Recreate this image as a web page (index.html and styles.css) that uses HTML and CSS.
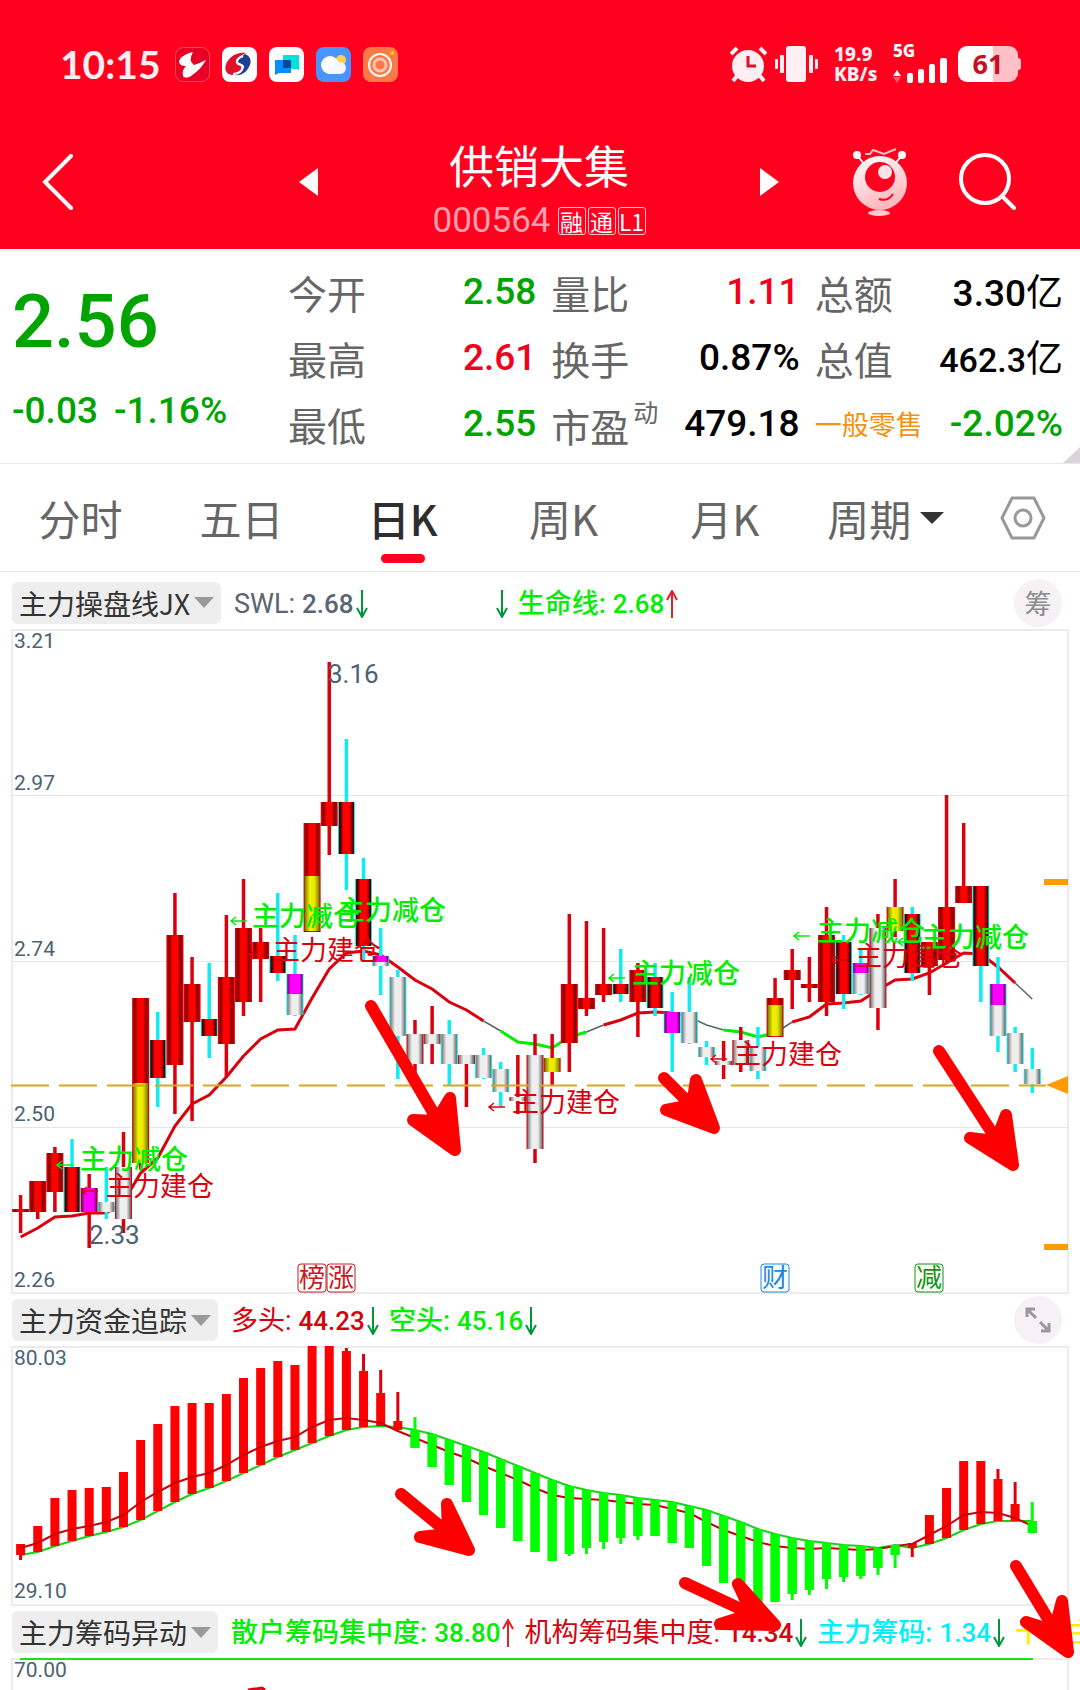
FILE: index.html
```html
<!DOCTYPE html>
<html lang="zh-CN">
<head>
  <meta charset="UTF-8">
  <meta name="viewport" content="width=device-width, initial-scale=1.0">
  <title>供销大集 000564</title>
  <link rel="stylesheet" href="styles.css">
</head>
<body>
  <header class="header">
    <div class="status">
      <span class="time">10:15</span>
      <div class="apps">
        <svg viewBox="0 0 35 35"><rect x=".5" y=".5" width="34" height="34" rx="8" fill="#e60027" stroke="#ff4a58"/><path d="M18 5C10 7 4 11 4 15c1 3 3 4 7 4-3 3-4 6-3 10 1 2 5 2 8 0 6-4 11-9 15-16-5 2-8 4-12 5-2-2-4-4-3-7 0-2 1-4 2-6z" fill="#fff"/></svg>
        <svg viewBox="0 0 35 35"><rect width="35" height="35" rx="8" fill="#fff"/><path d="M24 6C12 4 1 15 4 24c3 7 14 4 17-2 1-4-3-4-5-5-4-2-1-7 8-11z" fill="#e0102c"/><path d="M23 7c6 2 7 8 4 13-3 6-9 9-14 8 6-2 9-5 9-9-1-3-6-2-6-5 1-3 4-5 7-7z" fill="#1c3f94"/><path d="M21 9c-5 2-8 5-5 8 4 1 6 3 3 7-2 2-5 3-8 3" fill="none" stroke="#fff" stroke-width="2"/></svg>
        <svg viewBox="0 0 35 35"><rect width="35" height="35" rx="8" fill="#fff"/><path d="M14 8h16v15l-3-1H14z" fill="#00e0dc"/><path d="M6 13h16v13H10l-4 2z" fill="#0a8cff"/><rect x="14" y="13" width="8" height="8" fill="#044a9c"/></svg>
        <svg viewBox="0 0 35 35"><rect width="35" height="35" rx="8" fill="#4a94ff"/><circle cx="25" cy="13" r="5" fill="#ffd04a"/><circle cx="14" cy="18" r="9" fill="#fff"/><circle cx="24" cy="21" r="6" fill="#f2f7ff"/><rect x="12" y="19" width="13" height="8" fill="#f6f9ff"/></svg>
        <svg viewBox="0 0 35 35"><rect width="35" height="35" rx="8" fill="#ff7848"/><circle cx="17" cy="18" r="11" fill="none" stroke="#fff" stroke-width="2"/><circle cx="17" cy="18" r="6" fill="none" stroke="#ffc4ae" stroke-width="3"/><circle cx="29" cy="6" r="2" fill="#ffd000"/></svg>
      </div>
      <div class="system">
        <svg class="alarm" viewBox="0 0 37 36"><circle cx="18" cy="20" r="16" fill="#ffeef2"/><path d="M1 8l6-6M36 8l-6-6M7 30l-4 5M30 30l4 5" stroke="#ffeef2" stroke-width="4"/><path d="M18 10v10h8" fill="none" stroke="#e0102c" stroke-width="3"/></svg>
        <svg class="vibrate" viewBox="0 0 43 36" fill="#ffeef2"><rect x="11" width="20" height="36" rx="3"/><rect x="5" y="9" width="4" height="18" rx="1"/><rect x="0" y="13" width="3" height="10" rx="1"/><rect x="34" y="9" width="4" height="18" rx="1"/><rect x="40" y="13" width="3" height="10" rx="1"/></svg>
        <span class="speed"><span>19.9</span><span>KB/s</span></span>
        <div class="signal">
          <span>5G</span>
          <svg viewBox="0 0 55 26"><path d="M0 19l4-6 4 6z" fill="#fff"/><path d="M0 20h8l-4 6z" fill="#ff5a66"/><g fill="#fff"><rect x="14" y="16" width="6" height="10" rx="2"/><rect x="25" y="12" width="6" height="14" rx="2"/><rect x="36" y="7" width="6" height="19" rx="2"/><rect x="47" y="1" width="7" height="25" rx="2"/></g></svg>
        </div>
        <span class="battery">61</span>
      </div>
    </div>
    <nav class="nav">
      <div class="nav-side">
        <button class="icon-btn" aria-label="返回"><svg width="32" height="56" viewBox="0 0 32 56"><path d="M29 2L3 28l26 26" fill="none" stroke="#fff" stroke-width="4" stroke-linecap="round"/></svg></button>
        <button class="icon-btn" aria-label="上一只"><svg width="19" height="28" viewBox="0 0 19 28"><path d="M19 0v28L0 14z" fill="#fff"/></svg></button>
      </div>
      <div class="stock">
        <h1>供销大集</h1>
        <div class="code">000564 <span class="tags"><i>融</i><i>通</i><i>L1</i></span></div>
      </div>
      <div class="nav-side">
        <button class="icon-btn" aria-label="下一只"><svg width="19" height="28" viewBox="0 0 19 28"><path d="M0 0v28l19-14z" fill="#fff"/></svg></button>
        <button class="icon-btn robot" aria-label="助手">
          <svg width="56" height="68" viewBox="0 0 56 68">
            <defs><linearGradient id="face" x2=".4" y2="1"><stop offset="0" stop-color="#fff"/><stop offset="1" stop-color="#ffb8be"/></linearGradient></defs>
            <path d="M5 7l7 9M50 7l-7 9" stroke="#fff" stroke-width="2"/>
            <path d="M13 6l5 0 3-4 11 4 12-5" fill="none" stroke="#ffc0c6" stroke-width="2"/>
            <circle cx="5" cy="7" r="4" fill="#fff"/><circle cx="50" cy="7" r="4" fill="#fff"/>
            <circle cx="28" cy="35" r="27" fill="url(#face)"/>
            <circle cx="28" cy="29" r="15" fill="#ff001f"/><circle cx="33" cy="24" r="7" fill="#ffe4e6"/>
            <path d="M27 51q9 3 14-5" fill="none" stroke="#ff001f" stroke-width="2"/>
            <ellipse cx="27" cy="65" rx="11" ry="3" fill="#ffc8cc"/>
          </svg>
        </button>
        <button class="icon-btn" aria-label="搜索"><svg width="57" height="57" viewBox="0 0 57 57" fill="none" stroke="#fff" stroke-width="4" stroke-linecap="round"><circle cx="26" cy="26" r="24"/><path d="M43 43l12 12"/></svg></button>
      </div>
    </nav>
  </header>

  <section class="quote">
    <div class="price">
      <strong class="green">2.56</strong>
      <div class="change green"><span>-0.03</span><span>-1.16%</span></div>
    </div>
    <dl class="stats">
      <div><dt>今开</dt><dd class="green">2.58</dd></div>
      <div><dt>量比</dt><dd class="red">1.11</dd></div>
      <div><dt>总额</dt><dd>3.30<em>亿</em></dd></div>
      <div><dt>最高</dt><dd class="red">2.61</dd></div>
      <div><dt>换手</dt><dd>0.87%</dd></div>
      <div><dt>总值</dt><dd class="long">462.3<em>亿</em></dd></div>
      <div><dt>最低</dt><dd class="green">2.55</dd></div>
      <div><dt>市盈<sup>动</sup></dt><dd>479.18</dd></div>
      <div><dt class="sector">一般零售</dt><dd class="green">-2.02%</dd></div>
    </dl>
  </section>

  <nav class="tabs">
    <button>分时</button>
    <button>五日</button>
    <button class="active">日K</button>
    <button>周K</button>
    <button>月K</button>
    <label class="period"><select aria-label="周期"><option>周期</option></select></label>
    <button aria-label="设置"><svg width="46" height="44" viewBox="0 0 46 44" fill="none" stroke="#999" stroke-width="3"><path d="M12 2h22l10 20-10 20H12L2 22z" stroke-linejoin="round"/><circle cx="23" cy="22" r="8"/></svg></button>
  </nav>

  <main class="charts">
    <div class="bar bar-main">
      <label class="pill"><select aria-label="主图指标"><option>主力操盘线JX</option></select></label>
      <div class="legend">
        <span class="item slate">SWL:<b>2.68</b><svg class="arrow down"><use href="#arrow-down"/></svg></span>
        <span class="item blank"><svg class="arrow down"><use href="#arrow-down"/></svg></span>
        <span class="item lime">生命线:<b>2.68</b><svg class="arrow up"><use href="#arrow-up"/></svg></span>
      </div>
      <button class="round" aria-label="筹码">筹</button>
    </div>
    <svg class="chart" id="kline" viewBox="0 629 1080 665"></svg>

    <div class="bar">
      <label class="pill"><select aria-label="副图指标一"><option>主力资金追踪</option></select></label>
      <div class="legend">
        <span class="item crimson">多头:<b>44.23</b><svg class="arrow down"><use href="#arrow-down"/></svg></span>
        <span class="item lime">空头:<b>45.16</b><svg class="arrow down"><use href="#arrow-down"/></svg></span>
      </div>
      <button class="round" aria-label="展开"><svg width="26" height="26" viewBox="0 0 26 26" fill="none" stroke="#999" stroke-width="3"><path d="M10 2H2v8M2 2l9 9M24 16v8h-8M24 24l-9-9"/></svg></button>
    </div>
    <svg class="chart" id="fund" viewBox="0 1346 1080 260"></svg>

    <div class="bar bar-full">
      <label class="pill"><select aria-label="副图指标二"><option>主力筹码异动</option></select></label>
      <div class="legend">
        <span class="item lime">散户筹码集中度:<b>38.80</b><svg class="arrow up"><use href="#arrow-up"/></svg></span>
        <span class="item crimson">机构筹码集中度:<b>14.34</b><svg class="arrow down"><use href="#arrow-down"/></svg></span>
        <span class="item cyan">主力筹码:<b>1.34</b><svg class="arrow down"><use href="#arrow-down"/></svg></span>
        <span class="item yellow">十倍主</span>
      </div>
    </div>
    <svg class="chart" id="chips" viewBox="0 1658 1080 32">
      <path class="frame" d="M12 1690V1659H1068V1690"/>
      <path d="M20 1659H1033" stroke="#1fe01f" stroke-width="2"/>
      <path d="M248 1690l14-2 3 2" fill="none" stroke="#e00012" stroke-width="3"/>
      <text class="axis" x="14" y="1677">70.00</text>
    </svg>

    <!-- hand drawn marks -->
    <svg class="marks" viewBox="0 573 1080 1117">
      <path d="M371 1007L455 1151M413 1121L455 1151L450 1099L436 1122z"/>
      <path d="M664 1079L714 1129M666 1111L714 1129L696 1081L692 1106z"/>
      <path d="M939 1052L1013 1166M970 1139L1013 1166L1006 1116L996 1142z"/>
      <path d="M401 1495L469 1551M420 1538L469 1551L447 1505L448 1535z"/>
      <path d="M685 1584L775 1626M720 1625L775 1626L738 1585L752 1615z"/>
      <path d="M1016 1567L1068 1653M1026 1623L1068 1653L1062 1602L1054 1632z"/>
    </svg>
  </main>

  <svg class="defs" width="0" height="0">
    <symbol id="arrow-down" viewBox="0 0 12 28"><path d="M6 0v27M1 18l5 9 5-9" fill="none" stroke="currentColor" stroke-width="2"/></symbol>
    <symbol id="arrow-up" viewBox="0 0 12 28"><path d="M6 28V1M1 10l5-9 5 9" fill="none" stroke="currentColor" stroke-width="2"/></symbol>
    <defs>
      <linearGradient id="g-red"><stop offset="0" stop-color="#b00"/><stop offset=".15" stop-color="#800"/><stop offset=".32" stop-color="#f00"/><stop offset=".68" stop-color="#f00"/><stop offset=".85" stop-color="#800"/><stop offset="1" stop-color="#b00"/></linearGradient>
      <linearGradient id="g-dark"><stop offset="0" stop-color="#300"/><stop offset=".12" stop-color="#500"/><stop offset=".3" stop-color="#f00"/><stop offset=".7" stop-color="#f00"/><stop offset="1" stop-color="#200"/></linearGradient>
      <linearGradient id="g-gray"><stop offset="0" stop-color="#777"/><stop offset=".3" stop-color="#eee"/><stop offset=".7" stop-color="#eee"/><stop offset="1" stop-color="#666"/></linearGradient>
      <linearGradient id="g-yellow"><stop offset="0" stop-color="#770"/><stop offset=".35" stop-color="#f2f200"/><stop offset=".65" stop-color="#e8e800"/><stop offset="1" stop-color="#770"/></linearGradient>
      <linearGradient id="g-magenta"><stop offset="0" stop-color="#606"/><stop offset=".2" stop-color="#f0f"/><stop offset=".8" stop-color="#f0f"/><stop offset="1" stop-color="#606"/></linearGradient>
    </defs>
  </svg>
  <script src="chart.js"></script>
</body>
</html>
```
FILE: styles.css
```css
* { box-sizing: border-box; }
body {
  margin: 0;
  background: #fff;
  color: #000;
  font-family: Roboto, "Noto Sans CJK SC", sans-serif;
}
button, select {
  border: 0;
  padding: 0;
  margin: 0;
  background: none;
  font-family: "Noto Sans CJK SC", sans-serif;
  color: inherit;
  cursor: pointer;
}
select {
  appearance: none;
  outline: none;
}
svg { display: block; flex: none; }
.defs { position: absolute; }
.green { color: #00a400; }
.red { color: #f2001c; }

/* header */
.header {
  background: #ff001f;
  color: #fff;
  padding-top: 46px;
}
.status {
  display: flex;
  align-items: center;
  height: 36px;
  padding: 0 62px 0 60px;
}
.time {
  font: 700 39px/36px Lato, sans-serif;
  color: #ffeef2;
  width: 115px;
}
.apps { display: flex; gap: 12px; }
.apps svg { width: 35px; height: 35px; }
.system {
  display: flex;
  align-items: center;
  margin-left: auto;
}
.alarm { width: 37px; height: 36px; margin-right: 8px; }
.vibrate { width: 43px; height: 36px; margin-right: 16px; }
.speed {
  font: 800 19px/20px "Noto Sans", sans-serif;
  width: 59px;
  color: #ffeef2;
}
.speed span { display: block; }
.signal { width: 56px; margin-right: 9px; }
.signal span {
  display: block;
  font: 800 17px/12px "Noto Sans", sans-serif;
}
.signal svg { width: 55px; height: 26px; }
.battery {
  position: relative;
  width: 60px;
  height: 36px;
  border-radius: 9px;
  background: linear-gradient(90deg, #fff 58%, #ffc0c6 58%);
  color: #c4101f;
  font: 700 27px/36px "Noto Sans", sans-serif;
  text-align: center;
}
.battery::after {
  content: "";
  position: absolute;
  left: 100%;
  top: 12px;
  width: 3px;
  height: 12px;
  border-radius: 0 3px 3px 0;
  background: #ffc0c6;
}
.nav {
  display: grid;
  grid-template-columns: 276fr 442fr 256fr;
  align-items: center;
  height: 167px;
  padding: 46px 64px 0 42px;
}
.nav-side {
  display: flex;
  align-items: center;
  justify-content: space-between;
  padding-bottom: 14px;
}
.robot { margin-left: 22px; }
.stock { text-align: center; }
.stock h1 {
  margin: 0 0 12px;
  font: 400 45px/52px "Noto Sans CJK SC", sans-serif;
}
.code {
  display: flex;
  justify-content: center;
  align-items: center;
  gap: 7px;
  font-size: 35px;
  line-height: 36px;
  color: #ff9fab;
}
.tags { display: flex; gap: 2px; }
.tags i {
  width: 28px;
  height: 28px;
  border: 1px solid #ffc4cb;
  border-radius: 3px;
  color: #fff;
  font: normal 23px/26px "Noto Sans CJK SC", sans-serif;
}

/* quote */
.quote {
  position: relative;
  display: flex;
  padding: 10px 17px 6px 12px;
  border-bottom: 1px solid #e8e8e8;
}
.quote::after {
  content: "";
  position: absolute;
  right: 0;
  bottom: 0;
  border-left: 17px solid transparent;
  border-bottom: 16px solid #d9d5d9;
}
.price { flex: 276; }
.price strong {
  display: block;
  font-size: 74px;
  font-weight: 500;
  line-height: 86px;
  margin-top: 20px;
}
.change {
  display: flex;
  gap: 16px;
  margin-top: 24px;
  font-size: 37px;
  font-weight: 500;
  line-height: 44px;
}
.stats {
  flex: 775;
  display: grid;
  grid-template-columns: repeat(3, 1fr);
  column-gap: 15px;
  margin: 0;
}
.stats div {
  display: flex;
  justify-content: space-between;
  align-items: center;
  height: 66px;
}
.stats dt {
  font: 400 39px/44px "Noto Sans CJK SC", sans-serif;
  color: #666;
  white-space: nowrap;
}
.stats sup {
  font-size: 25px;
  line-height: 20px;
  vertical-align: 20px;
  margin-left: 4px;
}
.stats .sector { font-size: 27px; color: #f39110; }
.stats dd {
  margin: 0;
  font-size: 37px;
  font-weight: 500;
  line-height: 44px;
  white-space: nowrap;
}
.stats .long { font-size: 34px; }
.stats em { font: normal 400 37px/44px "Noto Sans CJK SC", sans-serif; }

/* tabs */
.tabs {
  display: grid;
  grid-template-columns: repeat(6, 17fr) 12fr;
  height: 108px;
  border-bottom: 1px solid #e8e8e8;
  color: #666;
}
.tabs button, .tabs select { font-size: 42px; }
.tabs button, .period {
  display: flex;
  align-items: center;
  justify-content: center;
}
.tabs .active {
  position: relative;
  color: #2e2e2e;
  font-weight: 500;
}
.tabs .active::after {
  content: "";
  position: absolute;
  bottom: 8px;
  width: 44px;
  height: 9px;
  border-radius: 5px;
  background: #ff001f;
}
.period { gap: 8px; }
.period::after {
  content: "";
  border: 12px solid transparent;
  border-top-color: #333;
  border-bottom: 0;
}

/* charts */
.charts { position: relative; overflow: hidden; }
.bar {
  display: flex;
  align-items: center;
  height: 52px;
  padding: 0 18px 0 12px;
}
.bar-main { height: 57px; padding-top: 4px; }
.bar-full { padding-right: 0; }
.pill {
  display: flex;
  align-items: center;
  gap: 3px;
  flex: none;
  height: 42px;
  padding: 0 7px;
  border-radius: 6px;
  background: #eee;
  color: #333;
}
.pill select { font-size: 28px; line-height: 42px; }
.pill::after {
  content: "";
  border: 10px solid transparent;
  border-top: 11px solid #999;
  border-bottom: 0;
}
.legend {
  display: flex;
  gap: 10px;
  flex: 1;
  overflow: hidden;
  margin-left: 13px;
  white-space: nowrap;
}
.item {
  display: flex;
  align-items: center;
  font-size: 27px;
  font-weight: 500;
  line-height: 40px;
  padding-top: 2px;
}
.item b { font-size: 26px; font-weight: 500; margin-left: 7px; }
.blank { width: 130px; justify-content: flex-end; }
.arrow { width: 12px; height: 28px; margin-left: 2px; }
.down { color: #00963c; }
.up { color: #e0202c; }
.slate { color: #5a6472; font-weight: 400; }
.lime { color: #00ee00; }
.crimson { color: #d8000c; font-weight: 400; }
.cyan { color: #00f0f8; }
.yellow { color: #fff000; }
.round {
  display: flex;
  align-items: center;
  justify-content: center;
  flex: none;
  width: 48px;
  height: 48px;
  border-radius: 50%;
  background: #f5f1f5;
  color: #8c8c8c;
  font-size: 27px;
}
.chart { width: 100%; height: auto; }
.frame { fill: none; stroke: #ebebeb; stroke-width: 2; }
.grid { stroke: #e6e6e6; stroke-width: 1; }
.axis { font-size: 21px; fill: #4a6272; }
.peak { font-size: 26px; fill: #4a6272; }
.note { font: 400 27px "Noto Sans CJK SC", sans-serif; }
.note.sell { font-weight: 500; }
.event { font: 400 26px "Noto Sans CJK SC", sans-serif; text-anchor: middle; }
.marks {
  position: absolute;
  left: 0;
  top: 0;
  width: 100%;
  height: auto;
  fill: #f00;
  stroke: #f00;
  stroke-width: 12;
  stroke-linecap: round;
  stroke-linejoin: round;
  pointer-events: none;
}
```
FILE: chart.js
```js
const x = i => 20.6 + 17.147 * i;

const RED = '#dc000c', CYAN = '#10ecf0', LIME = '#00ee00', SLATE = '#5a6472';

// type: r = red / red wick, c = red / cyan wick, w = gray / red wick, g = gray / cyan wick
// [type, high, top, bottom, low, extra segment]
const candles = [
  ['r',1195,1209,1212,1233], ['r',1181,1181,1212,1219], ['r',1147,1153,1192,1212], ['c',1139,1167,1212,1212],
  ['r',1174,1188,1212,1248,['magenta',1188,1212]], ['g',1167,1202,1212,1219], ['w',1132,1167,1219,1233],
  ['r',998,998,1163,1170,['yellow',1083,1163]], ['c',1012,1040,1078,1107], ['r',893,935,1065,1114],
  ['r',957,984,1022,1121], ['c',963,1019,1036,1058], ['r',915,977,1044,1077], ['r',879,928,1002,1016],
  ['r',928,942,959,1002], ['c',893,956,973,981], ['g',935,974,1015,1016,['magenta',974,994]],
  ['r',823,823,932,932,['yellow',876,931]], ['r',662,802,826,855], ['c',739,802,854,890],
  ['c',858,879,946,960], ['g',928,956,966,995,['magenta',956,962]], ['g',970,977,1036,1079],
  ['w',1020,1034,1064,1073], ['w',1006,1034,1044,1064], ['g',1020,1034,1064,1086], ['w',1055,1055,1064,1107],
  ['g',1048,1055,1078,1079], ['g',1062,1069,1092,1106], ['w',1055,1097,1101,1114], ['w',1034,1055,1149,1163],
  ['r',1034,1058,1072,1085,['yellow',1058,1072]], ['r',914,984,1043,1072], ['r',921,998,1009,1016],
  ['r',928,984,995,1002], ['c',949,984,994,1002], ['r',963,970,1002,1037], ['c',963,977,1008,1016],
  ['c',992,1012,1033,1072,['magenta',1012,1033]], ['g',977,1012,1043,1044], ['g',1041,1047,1057,1065],
  ['w',1041,1061,1065,1079], ['w',1027,1040,1065,1072], ['g',1027,1047,1071,1079],
  ['r',978,998,1037,1037,['yellow',1005,1036]], ['r',949,970,980,1009], ['r',957,984,988,1002],
  ['r',907,935,1002,1016], ['c',935,942,994,1009], ['g',950,963,994,995,['magenta',963,973]],
  ['w',914,928,1008,1030], ['r',879,907,931,937,['yellow',907,931]], ['c',907,914,973,981],
  ['r',942,942,966,995], ['r',795,907,960,963], ['r',823,886,903,903], ['c',886,886,966,1002],
  ['g',957,984,1036,1052,['magenta',984,1005]], ['g',1027,1033,1064,1072], ['g',1048,1069,1084,1093]
];

const ma = [1237,1228,1217,1216,1213,1213,1202,1173,1158,1126,1104,1095,1077,1056,1039,1030,1029,998,969,953,
  951,955,967,980,989,1002,1010,1021,1031,1042,1044,1048,1037,1032,1025,1020,1013,1012,1013,1017,
  1025,1030,1032,1037,1033,1022,1017,1004,1003,1001,990,980,979,973,963,953,954,967,983,999];
const maParts = [[0,27,RED],[27,28,SLATE],[28,33,LIME],[33,34,SLATE],[34,38,RED],[38,41,SLATE],[41,44,LIME],[44,45,SLATE],[45,58,RED],[58,59,SLATE]];

// [arrow x, arrow y, text x, baseline]
const sells = [[57,1165,80,1169], [231,921,252,926], [313,915,338,920], [609,978,632,983], [794,936,817,941], [898,942,921,947]];
const buys = [[82,1191,106,1196], [249,955,273,960], [489,1107,512,1112], [711,1059,734,1064], [832,960,855,966]];

const line = (x1, y1, x2, y2, color, w) => `<path d="M${x1} ${y1}L${x2} ${y2}" stroke="${color}" stroke-width="${w}"/>`;
const rect = (cx, top, bottom, w, fill) => `<rect x="${cx - w / 2}" y="${top}" width="${w}" height="${bottom - top}" fill="${fill}"/>`;
const poly = (ys, from, to, color, w) =>
  `<polyline fill="none" stroke="${color}" stroke-width="${w}" points="${ys.slice(from, to + 1).map((y, k) => x(from + k) + ',' + y).join(' ')}"/>`;

function drawKline() {
  let s = '<path class="frame" d="M12 630H1068V1293H12z"/>';
  [795.5, 961.5, 1127.5].forEach(y => s += `<path class="grid" d="M12 ${y}H1068"/>`);
  [[648,'3.21'],[790,'2.97'],[956,'2.74'],[1121,'2.50'],[1287,'2.26']].forEach(a => s += `<text class="axis" x="14" y="${a[0]}">${a[1]}</text>`);
  maParts.forEach(p => s += poly(ma, p[0], p[1], p[2], p[2] === SLATE ? 1.5 : 3));

  candles.forEach(([type, high, top, bottom, low, extra], i) => {
    const side = type === 'c' || type === 'g' ? CYAN : RED;
    const fill = { r: 'red', c: 'dark', w: 'gray', g: 'gray' }[type];
    s += line(x(i), high, x(i), low, side, 3.5);
    s += rect(x(i), top, bottom, 17, side) + rect(x(i), top, bottom, 15, `url(#g-${fill})`);
    if (extra) s += rect(x(i), extra[1], extra[2], 15, `url(#g-${extra[0]})`);
  });

  s += '<path d="M11 1085.5H1046" stroke="#dba520" stroke-width="2" stroke-dasharray="38 10"/>';
  s += '<path d="M1046 1085l22-9v18zM1044 879h24v6h-24zM1044 1244h24v6h-24z" fill="#ff9a00"/>';

  [[sells, '主力减仓', LIME, 'sell'], [buys, '主力建仓', RED, 'buy']].forEach(([list, text, color, kind]) => {
    list.forEach(([ax, ay, tx, ty]) => {
      s += `<path d="M${ax + 16} ${ay}H${ax}m5 -4l-5 4 5 4" fill="none" stroke="${color}" stroke-width="1.5"/>`;
      s += `<text class="note ${kind}" x="${tx}" y="${ty}" fill="${color}">${text}</text>`;
    });
  });
  s += '<text class="peak" x="328" y="683">3.16</text><text class="peak" x="89" y="1244">2.33</text>';

  [[312,'榜','#cc1a24'],[341,'涨','#cc1a24'],[775,'财','#1c88dc'],[929,'减','#0a960f']].forEach(([cx, t, c]) => {
    s += `<rect x="${cx - 14}" y="1264" width="28" height="28" rx="3" fill="#fff" stroke="${c}"/><text class="event" x="${cx}" y="1287" fill="${c}">${t}</text>`;
  });
  document.getElementById('kline').innerHTML = s;
}

// [top, bottom, wick top, wick bottom]
const bars = [[1544,1555,1544,1560],[1526,1552],[1498,1546],[1490,1541],[1488,1536],[1487,1532],[1472,1527],[1440,1520],
  [1424,1511],[1406,1502],[1403,1494],[1403,1488],[1394,1481],[1378,1473],[1368,1465],[1361,1457],[1365,1450],[1346,1443],
  [1346,1436],[1351,1430,1348],[1371,1427,1354],[1393,1426,1370],[1421,1430,1392],[1430,1448,1417],[1434,1467],[1440,1485],
  [1446,1502],[1452,1515],[1459,1528],[1466,1541],[1473,1552],[1480,1561],[1486,1554,1486,1556],[1490,1548,1490,1554],
  [1493,1542,1493,1549],[1495,1538,1495,1544],[1498,1536,1498,1540],[1500,1536],[1502,1543],[1506,1548],[1510,1566],
  [1516,1583],[1522,1590],[1529,1603],[1534,1602],[1538,1594,1538,1600],[1541,1590,1541,1595],[1543,1579,1543,1589],
  [1545,1577,1545,1582],[1546,1576,1546,1579],[1548,1568,1548,1575],[1545,1555,1545,1568],[1543,1548,1543,1557],
  [1515,1544],[1488,1538],[1461,1530],[1461,1524],[1479,1521,1469],[1504,1521,1482],[1521,1533,1502]];
const fast = [1548,1543,1534,1529,1526,1522,1515,1502,1492,1483,1477,1473,1465,1455,1447,1441,1437,1427,1420,1418,
  1420,1423,1431,1438,1445,1452,1458,1466,1473,1480,1488,1495,1498,1499,1500,1502,1504,1505,1509,1513,
  1522,1530,1536,1542,1546,1548,1549,1548,1549,1550,1549,1546,1544,1535,1526,1515,1512,1513,1518,1526];

function drawFund() {
  const falling = i => (i > 22 && i < 52) || i === 59;
  const slow = bars.map((b, i) => falling(i) ? b[0] : b[1]);
  slow[22] = 1427;
  let s = '<path class="frame" d="M12 1347H1068V1605H12z"/>';
  s += '<text class="axis" x="14" y="1365">80.03</text><text class="axis" x="14" y="1598">29.10</text>';
  s += poly(slow, 0, 59, '#14d414', 2);
  bars.forEach((b, i) => {
    s += line(x(i), b[2] || b[0], x(i), b[3] || b[1], falling(i) ? '#0f0' : RED, 3);
    s += rect(x(i), b[0], b[1], 9, falling(i) ? '#0f0' : '#f00');
  });
  s += poly(fast, 0, 59, '#cc0008', 2);
  // falling bars hide the fast average
  bars.forEach((b, i) => { if (falling(i)) s += rect(x(i), b[0], b[1], 9, '#0f0'); });
  document.getElementById('fund').innerHTML = s;
}

drawKline();
drawFund();
```
